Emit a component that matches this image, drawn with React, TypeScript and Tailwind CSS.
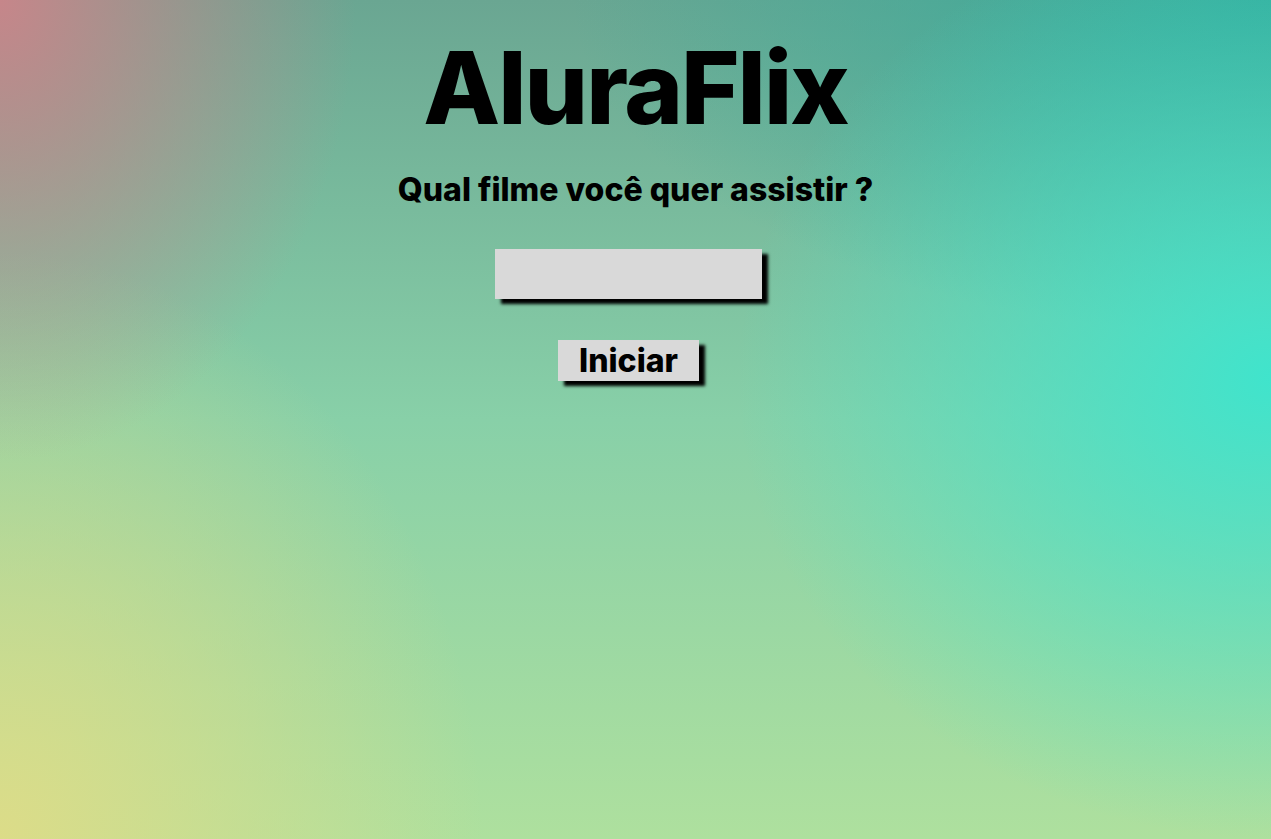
const App = () => {
  return (
    <main className="min-h-screen w-full flex flex-col items-center bg-[radial-gradient(ellipse_28%_55%_at_0%_0%,#c6868a_0%,transparent_100%),radial-gradient(ellipse_38%_70%_at_0%_100%,#dcdc88_0%,transparent_100%),radial-gradient(ellipse_42%_55%_at_100%_45%,#40e4cc_0%,transparent_100%),radial-gradient(ellipse_55%_40%_at_100%_0%,#36ac9c_0%,transparent_100%),linear-gradient(180deg,#6aa692_0%,#88d0a8_50%,#aee09e_100%)] font-['Inter','Liberation_Sans',sans-serif] text-black">
      <h1 className="mt-[38px] text-[100px] leading-none font-extrabold tracking-[-0.02em]">AluraFlix</h1>
      <h2 className="mt-[36px] text-[32px] leading-none font-extrabold">Qual filme você quer assistir ?</h2>
      <input
        type="text"
        className="mt-[43px] mr-[14px] w-[267px] h-[50px] bg-[#d9d9d9] border-0 outline-none shadow-[6px_5px_3px_#000]"
      />
      <button className="mt-[41px] mr-[14px] px-[21px] h-[41px] bg-[#d9d9d9] text-[32px] font-extrabold leading-none shadow-[6px_5px_3px_#000]">
        Iniciar
      </button>
    </main>
  );
};

export default App;
